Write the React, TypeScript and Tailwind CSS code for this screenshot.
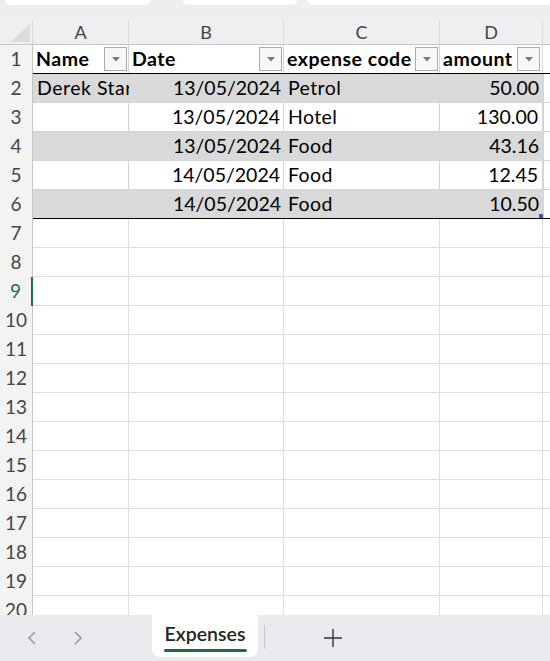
const font = { fontFamily: "Lato, 'Open Sans', sans-serif" };

const rows = [
  { name: "Derek Star", date: "13/05/2024", code: "Petrol", amount: "50.00" },
  { name: "", date: "13/05/2024", code: "Hotel", amount: "130.00" },
  { name: "", date: "13/05/2024", code: "Food", amount: "43.16" },
  { name: "", date: "14/05/2024", code: "Food", amount: "12.45" },
  { name: "", date: "14/05/2024", code: "Food", amount: "10.50" },
];

function FilterButton() {
  return (
    <div className="w-[23px] h-[24px] shrink-0 border border-[#ababab] bg-[#f7f7f7] flex items-center justify-center">
      <svg width="8" height="5" viewBox="0 0 8 5">
        <path d="M0 0h8L4 4.5z" fill="#7a7a7a" />
      </svg>
    </div>
  );
}

function RowHead({ n }: { n: number }) {
  const sel = n === 9;
  return (
    <div
      className={
        "w-[33px] shrink-0 flex items-center justify-center bg-[#f3f3f3] text-[19px] tracking-normal " +
        (sel ? "text-[#1e7145] border-r-2 border-[#1e7145]" : "text-[#454545] border-r border-[#c6c6c6]")
      }
    >
      {n}
    </div>
  );
}

export default function App() {
  const empties = Array.from({ length: 14 }, (_, i) => i + 7);
  return (
    <div className="w-[550px] h-[661px] overflow-hidden bg-white flex flex-col" style={font}>
      {/* top strip */}
      <div className="h-[20px] shrink-0 bg-[#eeeef0] flex items-start">
        <div className="ml-[5px] w-[145px] h-[5px] bg-white rounded-b-md" />
        <div className="ml-[33px] w-[114px] h-[5px] bg-white rounded-b-md" />
        <div className="ml-[10px] flex-1 h-[5px] bg-white rounded-bl-md" />
      </div>

      {/* sheet */}
      <div className="h-[595px] shrink-0 overflow-hidden flex flex-col text-[19.5px] text-black">
        {/* column letters */}
        <div className="h-[25px] shrink-0 flex bg-[#efeff1] border-b border-[#c8c8c8] text-[#444] text-[18px]">
          <div className="w-[33px] shrink-0 border-r border-[#dadada] flex items-end justify-end p-[2px]">
            <svg width="20" height="18" viewBox="0 0 20 18">
              <path d="M20 0V18H0z" fill="#dcdcdc" />
            </svg>
          </div>
          <div className="w-[96px] shrink-0 border-r border-[#dadada] flex items-center justify-center">A</div>
          <div className="w-[155px] shrink-0 border-r border-[#dadada] flex items-center justify-center">B</div>
          <div className="w-[156px] shrink-0 border-r border-[#dadada] flex items-center justify-center">C</div>
          <div className="w-[103px] shrink-0 border-r border-[#dadada] flex items-center justify-center">D</div>
          <div className="flex-1" />
        </div>

        {/* header row */}
        <div className="h-[29px] shrink-0 flex">
          <RowHead n={1} />
          <div className="flex-1 flex border-b border-black font-bold tracking-[0.5px]">
            <div className="w-[96px] shrink-0 flex items-center justify-between pl-[3px] pr-[1px] border-r border-[#d4d4d4] overflow-hidden">
              <span>Name</span>
              <FilterButton />
            </div>
            <div className="w-[155px] shrink-0 flex items-center justify-between pl-[3px] pr-[1px] border-r border-[#d4d4d4]">
              <span>Date</span>
              <FilterButton />
            </div>
            <div className="w-[156px] shrink-0 flex items-center justify-between pl-[3px] pr-[1px] border-r border-[#d4d4d4] whitespace-nowrap">
              <span>expense code</span>
              <FilterButton />
            </div>
            <div className="w-[103px] shrink-0 flex items-center justify-between pl-[3px] pr-[2px] border-r border-[#d4d4d4] whitespace-nowrap">
              <span>amount</span>
              <FilterButton />
            </div>
            <div className="flex-1" />
          </div>
        </div>

        {/* data rows */}
        {rows.map((r, i) => {
          const band = i % 2 === 0;
          const last = i === rows.length - 1;
          return (
            <div key={i} className="h-[29px] shrink-0 flex">
              <RowHead n={i + 2} />
              <div className={"flex-1 flex " + (last ? "border-b border-black" : "border-b border-[#d4d4d4]")}>
                <div
                  className={
                    "w-[510px] shrink-0 flex relative " + (band ? "bg-[#d9d9d9]" : "bg-white")
                  }
                >
                  <div className={"w-[96px] shrink-0 flex items-center pl-[4px] overflow-hidden whitespace-nowrap tracking-[0.5px] " + (band ? "" : "border-r border-[#d4d4d4]")}>
                    {r.name}
                  </div>
                  <div className={"w-[155px] shrink-0 flex items-center justify-end pr-[3px] " + (band ? "" : "border-r border-[#d4d4d4]")}>
                    {r.date}
                  </div>
                  <div className={"w-[156px] shrink-0 flex items-center pl-[4px] tracking-[0.4px] " + (band ? "" : "border-r border-[#d4d4d4]")}>
                    {r.code}
                  </div>
                  <div className={"w-[103px] shrink-0 flex items-center justify-end pr-[4px] " + (band ? "" : "border-r border-[#d4d4d4]")}>
                    {r.amount}
                  </div>
                  {last && (
                    <div className="absolute right-[0px] bottom-[0px] w-[4px] h-[4px] bg-[#3b5aa8]" />
                  )}
                </div>
                <div className="flex-1 border-l border-[#d4d4d4]" />
              </div>
            </div>
          );
        })}

        {/* empty rows */}
        {empties.map((n) => (
          <div key={n} className="h-[29px] shrink-0 flex">
            <RowHead n={n} />
            <div className="flex-1 flex border-b border-[#dedede]">
              <div className="w-[96px] shrink-0 border-r border-[#dedede]" />
              <div className="w-[155px] shrink-0 border-r border-[#dedede]" />
              <div className="w-[156px] shrink-0 border-r border-[#dedede]" />
              <div className="w-[103px] shrink-0 border-r border-[#dedede]" />
              <div className="flex-1" />
            </div>
          </div>
        ))}
      </div>

      {/* sheet tabs */}
      <div className="h-[46px] shrink-0 bg-[#e8eaed] flex items-start">
        <div className="w-[152px] h-full flex items-center pl-[26px] gap-[34px] text-[#9a9a9a]">
          <svg width="12" height="16" viewBox="0 0 12 16">
            <path d="M9 2L3 8l6 6" fill="none" stroke="currentColor" strokeWidth="1.6" />
          </svg>
          <svg width="12" height="16" viewBox="0 0 12 16">
            <path d="M3 2l6 6-6 6" fill="none" stroke="currentColor" strokeWidth="1.6" />
          </svg>
        </div>
        <div className="w-[106px] h-[42px] bg-white rounded-b-lg flex flex-col items-center justify-center">
          <span className="text-[19.5px] font-semibold text-[#242424] leading-none mt-[4px]">Expenses</span>
          <div className="mt-[6px] w-[83px] h-[3px] bg-[#1e6e42] rounded-full" />
        </div>
        <div className="ml-[6px] mt-[10px] w-px h-[24px] bg-[#c6c8cc]" />
        <div className="ml-[58px] h-full flex items-center text-[#333]">
          <svg width="20" height="20" viewBox="0 0 20 20">
            <path d="M10 1v18M1 10h18" stroke="currentColor" strokeWidth="1.4" />
          </svg>
        </div>
      </div>
    </div>
  );
}
